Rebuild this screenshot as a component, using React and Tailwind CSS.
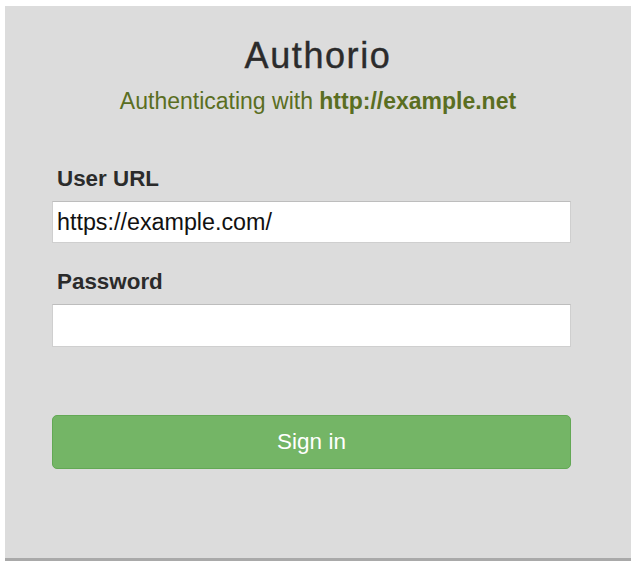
import React, { useState } from "react";

const App = () => {
  const [url, setUrl] = useState("https://example.com/");
  const [password, setPassword] = useState("");

  return (
    <div className="min-h-[569px] bg-white font-['Liberation_Sans',Arial,sans-serif]">
      <div className="ml-[5px] pt-[6px] w-[626px]">
        <div className="bg-[#dcdcdc] border-b-[3px] border-[#a9a9a9] pt-[32px] pb-[89px]">
          <h1 className="text-center text-[36px] leading-[36px] tracking-[1.6px] text-[#2b2b2b] [-webkit-text-stroke:0.4px_#2b2b2b]">Authorio</h1>
          <p className="mt-[16px] text-center text-[23px] leading-[23px] text-[#5a6e22]">
            Authenticating with <b className="font-bold">http://example.net</b>
          </p>

          <form className="ml-[47px] w-[519px] mt-[55px]" onSubmit={(e) => e.preventDefault()}>
            <label className="block pl-[5px] text-[22.4px] leading-[22px] font-bold text-[#2b2b2b]">User URL</label>
            <input
              type="text"
              value={url}
              onChange={(e) => setUrl(e.target.value)}
              className="mt-[11px] block w-full h-[42px] bg-white border border-[#cfcfcf] border-t-[#bdbdbd] px-[4px] text-[23.3px] text-[#111] outline-none"
            />

            <label className="block mt-[28px] pl-[5px] text-[22.4px] leading-[22px] font-bold text-[#2b2b2b]">Password</label>
            <input
              type="password"
              value={password}
              onChange={(e) => setPassword(e.target.value)}
              className="mt-[11px] block w-full h-[43px] bg-white border border-[#cfcfcf] border-t-[#bdbdbd] px-[4px] text-[23px] text-[#111] outline-none"
            />

            <button
              type="submit"
              className="mt-[68px] block w-full h-[54px] rounded-[5px] bg-[#74b566] border border-[#63a855] text-white text-[22.5px]"
            >
              Sign in
            </button>
          </form>
        </div>
      </div>
    </div>
  );
};

export default App;
